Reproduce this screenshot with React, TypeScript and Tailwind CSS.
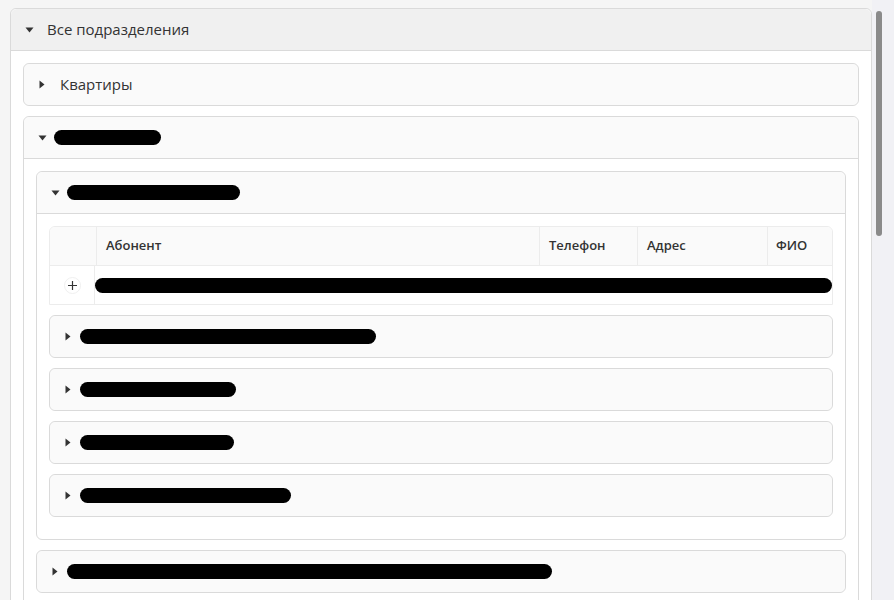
import type { ReactNode } from "react";

const Caret = ({ open }: { open: boolean }) =>
  open ? (
    <svg width="9" height="6" viewBox="0 0 9 6" className="text-[#333]">
      <path d="M0.5 0.5h8L4.5 5.5z" fill="currentColor" />
    </svg>
  ) : (
    <svg width="6" height="9" viewBox="0 0 6 9" className="text-[#333]">
      <path d="M0.5 0.5v8L5.5 4.5z" fill="currentColor" />
    </svg>
  );

// redacted text
const Bar = ({ w }: { w: number }) => (
  <span className="inline-block h-[15px] rounded-full bg-black" style={{ width: w }} />
);

type PanelProps = {
  title: ReactNode;
  open?: boolean;
  top?: boolean;
  children?: ReactNode;
  className?: string;
};

const Panel = ({ title, open = false, top = false, children, className = "" }: PanelProps) => (
  <div
    className={`rounded-[6px] border border-[#dadada] ${
      open ? "bg-white" : "bg-[#fafafa]"
    } ${className}`}
  >
    <div
      className={`flex items-center rounded-t-[6px] pl-[12px] ${
        open ? "h-[42px] border-b border-[#dadada]" : "h-[41px] rounded-b-[6px]"
      } ${top ? "bg-[#f0f0f0]" : "bg-[#fafafa]"}`}
    >
      <span className="flex w-[12px] justify-center">
        <Caret open={open} />
      </span>
      <div className="ml-[6px] flex items-center">{title}</div>
    </div>
    {open && <div className="px-[12px] pt-[12px] pb-[12px]">{children}</div>}
  </div>
);

const Title = ({ text }: { text: string }) => (
  <span className="ml-[6px] text-[15px] text-[#333]">{text}</span>
);

const Plus = () => (
  <span className="flex h-[17px] w-[17px] items-center justify-center rounded-full border border-[#f0f0f0] bg-white">
    <svg width="11" height="11" viewBox="0 0 11 11">
      <path d="M5.5 1v9M1 5.5h9" stroke="#333" strokeWidth="1.2" />
    </svg>
  </span>
);

const Subscribers = () => (
  <div className="mb-[10px] overflow-hidden rounded-t-[6px] border border-[#ececec] text-[13px] text-[#333]">
    <div className="flex h-[38px] items-center bg-[#fafafa] font-semibold">
      <div className="h-full w-[47px] border-r border-[#ececec]" />
      <div className="flex h-full w-[443px] items-center border-r border-[#ececec] pl-[9px]">Абонент</div>
      <div className="flex h-full w-[98px] items-center border-r border-[#ececec] pl-[9px]">Телефон</div>
      <div className="flex h-full w-[130px] items-center border-r border-[#ececec] pl-[9px]">Адрес</div>
      <div className="flex h-full flex-1 items-center pl-[8px]">ФИО</div>
    </div>
    <div className="flex h-[39px] items-center border-t border-[#ececec] bg-white">
      <div className="flex h-full w-[47px] items-center justify-center border-r border-[#ececec]">
        <Plus />
      </div>
      <div className="flex h-full flex-1 items-center">
        <span className="inline-block h-[15px] w-[737px] rounded-full bg-black" />
      </div>
    </div>
  </div>
);

const more = [260, 190, 310];
const tops = [240, 180, 300];

export default function App() {
  return (
    <div className="flex h-[600px] bg-[#f5f5f5] font-['Open_Sans','Noto_Sans',sans-serif]">
      <div className="flex-1 overflow-hidden pt-[8px] pl-[10px]">
        <Panel top open title={<Title text="Все подразделения" />}>
          <Panel title={<Title text="Квартиры" />} className="mb-[10px]" />
          <Panel open title={<Bar w={107} />} className="mb-[10px]">
            <Panel open title={<Bar w={173} />} className="mb-[10px]">
              <Subscribers />
              <Panel title={<Bar w={296} />} className="mb-[10px]" />
              <Panel title={<Bar w={156} />} className="mb-[10px]" />
              <Panel title={<Bar w={154} />} className="mb-[10px]" />
              <Panel title={<Bar w={211} />} className="mb-[10px]" />
            </Panel>
            <Panel title={<Bar w={485} />} className="mb-[10px]" />
            {more.map((w, i) => (
              <Panel key={i} title={<Bar w={w} />} className="mb-[10px]" />
            ))}
          </Panel>
          {tops.map((w, i) => (
            <Panel key={i} title={<Bar w={w} />} className="mb-[10px]" />
          ))}
        </Panel>
      </div>
      {/* scrollbar */}
      <div className="w-[22px] shrink-0 bg-[#f1f1f5] pt-[11px] pl-[4px]">
        <div className="h-[225px] w-[6px] rounded-full bg-[#8a8a8a]" />
      </div>
    </div>
  );
}
